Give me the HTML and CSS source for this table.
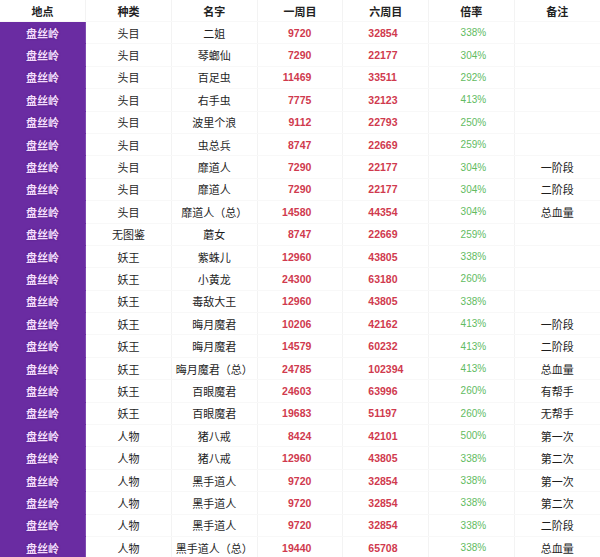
FILE: index.html
```html
<!DOCTYPE html>
<html lang="zh-CN">
<head>
<meta charset="utf-8">
<title>盘丝岭</title>
<link rel="stylesheet" href="styles.css">
</head>
<body>
<table class="boss-table">
  <colgroup>
    <col><col><col><col><col><col><col>
  </colgroup>
  <thead>
    <tr><th>地点</th><th>种类</th><th>名字</th><th>一周目</th><th>六周目</th><th>倍率</th><th>备注</th></tr>
  </thead>
  <tbody>
    <tr><td class="loc">盘丝岭</td><td>头目</td><td>二姐</td><td class="n1">9720</td><td class="n6">32854</td><td class="rate">338%</td><td></td></tr>
    <tr><td class="loc">盘丝岭</td><td>头目</td><td>琴螂仙</td><td class="n1">7290</td><td class="n6">22177</td><td class="rate">304%</td><td></td></tr>
    <tr><td class="loc">盘丝岭</td><td>头目</td><td>百足虫</td><td class="n1">11469</td><td class="n6">33511</td><td class="rate">292%</td><td></td></tr>
    <tr><td class="loc">盘丝岭</td><td>头目</td><td>右手虫</td><td class="n1">7775</td><td class="n6">32123</td><td class="rate">413%</td><td></td></tr>
    <tr><td class="loc">盘丝岭</td><td>头目</td><td>波里个浪</td><td class="n1">9112</td><td class="n6">22793</td><td class="rate">250%</td><td></td></tr>
    <tr><td class="loc">盘丝岭</td><td>头目</td><td>虫总兵</td><td class="n1">8747</td><td class="n6">22669</td><td class="rate">259%</td><td></td></tr>
    <tr><td class="loc">盘丝岭</td><td>头目</td><td>靡道人</td><td class="n1">7290</td><td class="n6">22177</td><td class="rate">304%</td><td>一阶段</td></tr>
    <tr><td class="loc">盘丝岭</td><td>头目</td><td>靡道人</td><td class="n1">7290</td><td class="n6">22177</td><td class="rate">304%</td><td>二阶段</td></tr>
    <tr><td class="loc">盘丝岭</td><td>头目</td><td>靡道人（总）</td><td class="n1">14580</td><td class="n6">44354</td><td class="rate">304%</td><td>总血量</td></tr>
    <tr><td class="loc">盘丝岭</td><td>无图鉴</td><td>蘑女</td><td class="n1">8747</td><td class="n6">22669</td><td class="rate">259%</td><td></td></tr>
    <tr><td class="loc">盘丝岭</td><td>妖王</td><td>紫蛛儿</td><td class="n1">12960</td><td class="n6">43805</td><td class="rate">338%</td><td></td></tr>
    <tr><td class="loc">盘丝岭</td><td>妖王</td><td>小黄龙</td><td class="n1">24300</td><td class="n6">63180</td><td class="rate">260%</td><td></td></tr>
    <tr><td class="loc">盘丝岭</td><td>妖王</td><td>毒敌大王</td><td class="n1">12960</td><td class="n6">43805</td><td class="rate">338%</td><td></td></tr>
    <tr><td class="loc">盘丝岭</td><td>妖王</td><td>晦月魔君</td><td class="n1">10206</td><td class="n6">42162</td><td class="rate">413%</td><td>一阶段</td></tr>
    <tr><td class="loc">盘丝岭</td><td>妖王</td><td>晦月魔君</td><td class="n1">14579</td><td class="n6">60232</td><td class="rate">413%</td><td>二阶段</td></tr>
    <tr><td class="loc">盘丝岭</td><td>妖王</td><td>晦月魔君（总）</td><td class="n1">24785</td><td class="n6">102394</td><td class="rate">413%</td><td>总血量</td></tr>
    <tr><td class="loc">盘丝岭</td><td>妖王</td><td>百眼魔君</td><td class="n1">24603</td><td class="n6">63996</td><td class="rate">260%</td><td>有帮手</td></tr>
    <tr><td class="loc">盘丝岭</td><td>妖王</td><td>百眼魔君</td><td class="n1">19683</td><td class="n6">51197</td><td class="rate">260%</td><td>无帮手</td></tr>
    <tr><td class="loc">盘丝岭</td><td>人物</td><td>猪八戒</td><td class="n1">8424</td><td class="n6">42101</td><td class="rate">500%</td><td>第一次</td></tr>
    <tr><td class="loc">盘丝岭</td><td>人物</td><td>猪八戒</td><td class="n1">12960</td><td class="n6">43805</td><td class="rate">338%</td><td>第二次</td></tr>
    <tr><td class="loc">盘丝岭</td><td>人物</td><td>黑手道人</td><td class="n1">9720</td><td class="n6">32854</td><td class="rate">338%</td><td>第一次</td></tr>
    <tr><td class="loc">盘丝岭</td><td>人物</td><td>黑手道人</td><td class="n1">9720</td><td class="n6">32854</td><td class="rate">338%</td><td>第二次</td></tr>
    <tr><td class="loc">盘丝岭</td><td>人物</td><td>黑手道人</td><td class="n1">9720</td><td class="n6">32854</td><td class="rate">338%</td><td>二阶段</td></tr>
    <tr><td class="loc">盘丝岭</td><td>人物</td><td>黑手道人（总）</td><td class="n1">19440</td><td class="n6">65708</td><td class="rate">338%</td><td>总血量</td></tr>
  </tbody>
</table>
</body>
</html>
```

FILE: styles.css
```css
html, body {
  margin: 0;
  padding: 0;
  background: #ffffff;
}

body {
  font-family: "Liberation Sans", "Noto Sans CJK SC", sans-serif;
  color: #1e1e1e;
}

.boss-table {
  width: 600px;
  table-layout: fixed;
  border-collapse: collapse;
  font-size: 11px;
}

.boss-table th,
.boss-table td {
  padding: 0;
  text-align: center;
  white-space: nowrap;
  overflow: hidden;
  border-right: 1px solid #f3f3f3;
  border-bottom: 1px solid #f8f8f8;
}

.boss-table th:last-child,
.boss-table td:last-child {
  border-right: none;
}

.boss-table th {
  height: 21px;
  font-weight: bold;
  color: #222;
}

.boss-table td {
  height: 21.4px;
}

.boss-table td.loc {
  background: #6a2ca2;
  color: #f4ddff;
  font-weight: bold;
  text-shadow: 0 0 2px #4a1a78;
  border-right: 1px solid #7e4bb0;
  border-bottom: 1px solid #6a2ca2;
}

.boss-table td.n1 {
  text-align: right;
  padding-right: 31px;
  color: #d03a4e;
  font-weight: bold;
  font-size: 10.5px;
}

.boss-table td.n6 {
  text-align: left;
  padding-left: 25px;
  color: #d03a4e;
  font-weight: bold;
  font-size: 10.5px;
}

.boss-table td.rate {
  color: #62bb5f;
  font-size: 10px;
  padding-left: 4px;
}
```
